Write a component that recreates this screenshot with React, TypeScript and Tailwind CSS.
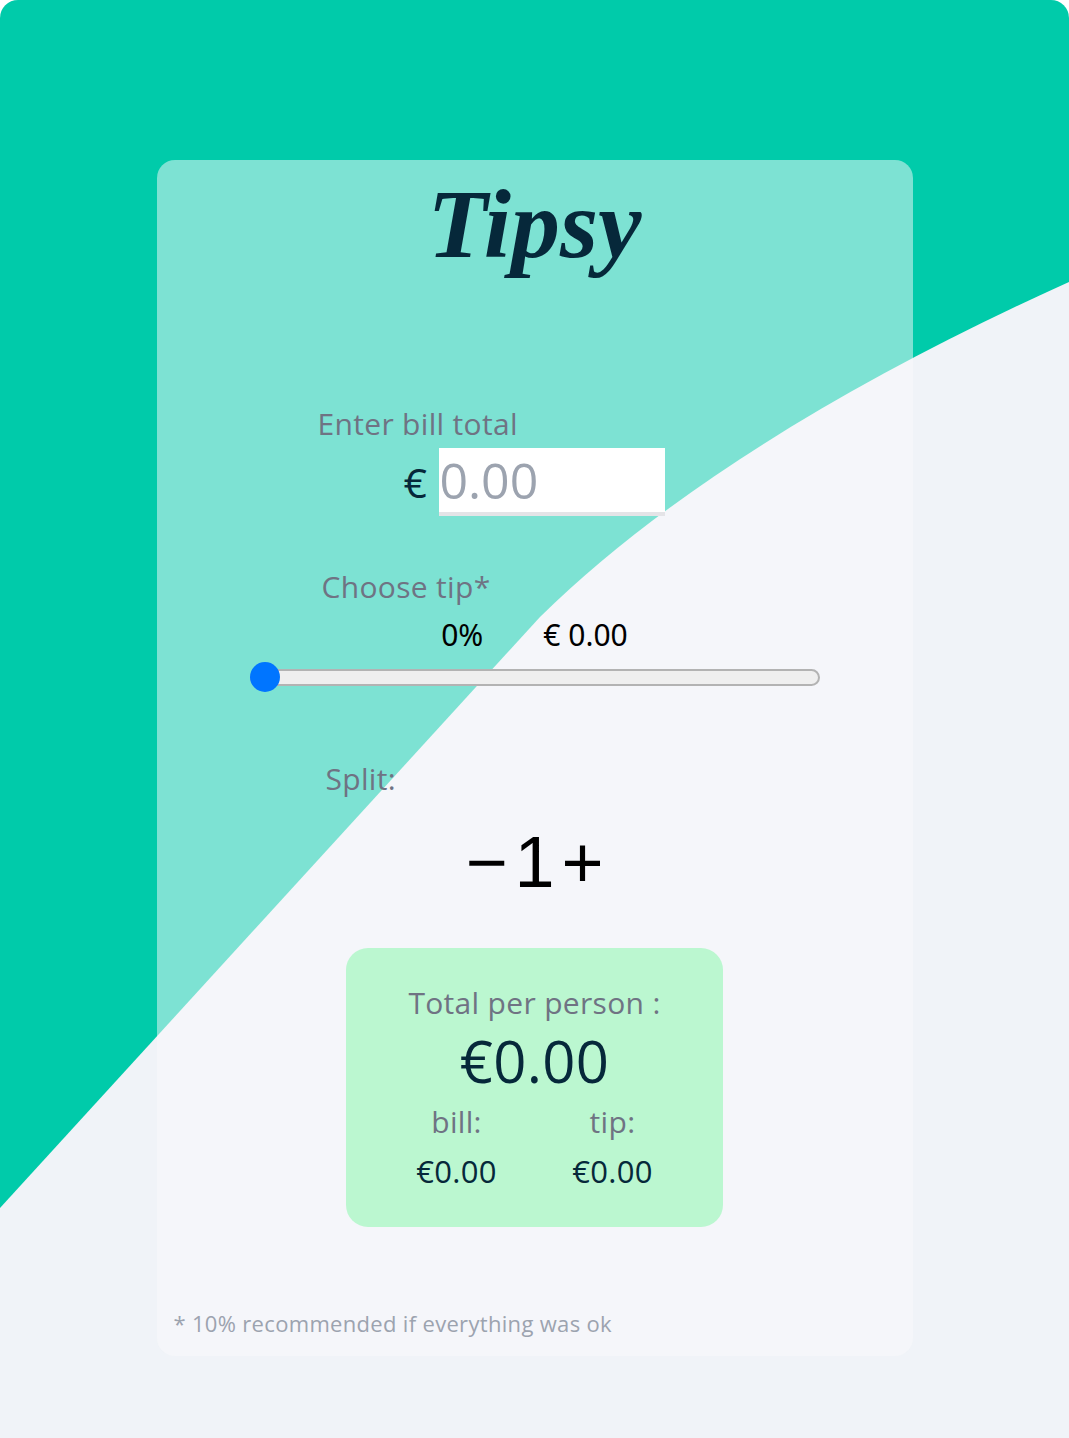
import React, { useState } from 'react';

const sans = "font-['Open_Sans','Noto_Sans',sans-serif] tracking-[0.02em]";

export default function App() {
  const [split, setSplit] = useState(1);

  return (
    <div className="relative min-h-[1438px] w-full overflow-hidden rounded-t-[18px] bg-[#00cbaa]">
      {/* background wave */}
      <svg className="absolute inset-0 h-full w-full" viewBox="0 0 1069 1438" preserveAspectRatio="none">
        <path d="M0 1208 L540 617 Q720 440 1069 282 L1069 1438 L0 1438 Z" fill="#f0f3f8" />
      </svg>

      <div className={`relative mx-auto mt-[160px] flex h-[1196px] w-[756px] flex-col rounded-[18px] bg-[#f9fafb]/50 ${sans}`}>
        <h1 className="mt-[15px] text-center font-['Liberation_Serif',serif] text-[98px] font-bold italic leading-none tracking-normal text-[#06283a]">
          Tipsy
        </h1>

        {/* bill */}
        <label className="ml-[161px] mt-[136px] text-[30px] leading-none text-[#6f7383]">Enter bill total</label>
        <div className="mt-[9px] flex items-center justify-center gap-[12px]">
          <span className="text-[41px] leading-none text-[#06283a]">€</span>
          <input
            type="text"
            placeholder="0.00"
            className="h-[68px] w-[226px] border-b-4 border-[#e4e4e7] bg-white p-0 text-[50px] tracking-normal text-[#06283a] outline-none placeholder:text-[#9ca3af]"
          />
        </div>

        {/* tip */}
        <label className="ml-[165px] mt-[56px] text-[30px] leading-none text-[#6f7383]">Choose tip*</label>
        <div className="mt-[18px] flex justify-center gap-[60px] font-['Noto_Sans',sans-serif] text-[30px] leading-none tracking-normal text-black">
          <span>0%</span>
          <span>€ 0.00</span>
        </div>
        <div className="relative mx-auto mt-[12px] flex h-[30px] w-[570px] items-center">
          <div className="h-[17px] w-full rounded-full border-2 border-[#b3b3b3] bg-[#efefef]" />
          <div className="absolute left-0 top-0 h-[30px] w-[30px] rounded-full bg-[#0075ff]" />
        </div>

        {/* split */}
        <label className="ml-[169px] mt-[72px] text-[30px] leading-none text-[#6f7383]">Split:</label>
        <div className="mt-[32px] flex items-center justify-center gap-[7px] font-['Liberation_Sans',Arial,sans-serif] text-[72px] leading-none tracking-normal text-black">
          <button onClick={() => setSplit((s) => Math.max(1, s - 1))}>−</button>
          <span>{split}</span>
          <button onClick={() => setSplit((s) => s + 1)}>+</button>
        </div>

        {/* result */}
        <div className="mx-auto mt-[50px] flex h-[279px] w-[377px] flex-col items-center rounded-[22px] bg-[#bbf7d0]">
          <div className="mt-[40px] text-[30px] leading-none text-[#6f7383]">Total per person :</div>
          <div className="mt-[14px] text-[58px] leading-none text-[#06283a]">€0.00</div>
          <div className="mt-[17px] grid w-[312px] grid-cols-2 text-center">
            <div className="text-[30px] leading-none text-[#6f7383]">bill:</div>
            <div className="text-[30px] leading-none text-[#6f7383]">tip:</div>
            <div className="mt-[19px] text-[31px] leading-none text-[#06283a]">€0.00</div>
            <div className="mt-[19px] text-[31px] leading-none text-[#06283a]">€0.00</div>
          </div>
        </div>

        <p className="mb-[22px] ml-[17px] mt-auto text-[22px] leading-none text-[#9ca3af]">
          * 10% recommended if everything was ok
        </p>
      </div>
    </div>
  );
}
